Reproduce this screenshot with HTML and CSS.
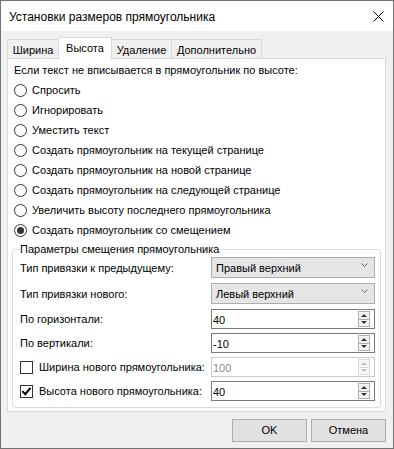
FILE: index.html
```html
<!DOCTYPE html>
<html lang="ru">
<head>
<meta charset="utf-8">
<title>Установки размеров прямоугольника</title>
<link rel="stylesheet" href="styles.css">
</head>
<body>
<div class="window">
  <div class="titlebar">
    <span class="title">Установки размеров прямоугольника</span>
    <svg class="close" width="11" height="11" viewBox="0 0 11 11"><path d="M0.5 0.5 L10.5 10.5 M10.5 0.5 L0.5 10.5" stroke="#000" stroke-width="1" fill="none"/></svg>
  </div>
  <div class="client">
    <div class="tabs">
      <div class="tab t1">Ширина</div>
      <div class="tab t2 sel">Высота</div>
      <div class="tab t3">Удаление</div>
      <div class="tab t4">Дополнительно</div>
    </div>
    <div class="panel">
      <div class="hdr">Если текст не вписывается в прямоугольник по высоте:</div>
      <div class="radios">
        <div class="radio"><span class="rb"></span>Спросить</div>
        <div class="radio"><span class="rb"></span>Игнорировать</div>
        <div class="radio"><span class="rb"></span>Уместить текст</div>
        <div class="radio"><span class="rb"></span>Создать прямоугольник на текущей странице</div>
        <div class="radio"><span class="rb"></span>Создать прямоугольник на новой странице</div>
        <div class="radio"><span class="rb"></span>Создать прямоугольник на следующей странице</div>
        <div class="radio"><span class="rb"></span>Увеличить высоту последнего прямоугольника</div>
        <div class="radio"><span class="rb on"></span>Создать прямоугольник со смещением</div>
      </div>
      <fieldset class="group">
        <legend>Параметры смещения прямоугольника</legend>
        <div class="row crow">
          <span class="lbl">Тип привязки к предыдущему:</span>
          <div class="combo"><span>Правый верхний</span><svg class="chev" width="7" height="4" viewBox="0 0 7 4"><polyline points="0.5,0.5 3.5,3.5 6.5,0.5" fill="none" stroke="#6a6a6a" stroke-width="1"/></svg></div>
        </div>
        <div class="row crow">
          <span class="lbl">Тип привязки нового:</span>
          <div class="combo"><span>Левый верхний</span><svg class="chev" width="7" height="4" viewBox="0 0 7 4"><polyline points="0.5,0.5 3.5,3.5 6.5,0.5" fill="none" stroke="#6a6a6a" stroke-width="1"/></svg></div>
        </div>
        <div class="row srow">
          <span class="lbl">По горизонтали:</span>
          <div class="spin"><span>40</span><span class="arrows"><span class="ab up"></span><span class="ab dn"></span></span></div>
        </div>
        <div class="row srow">
          <span class="lbl">По вертикали:</span>
          <div class="spin"><span>-10</span><span class="arrows"><span class="ab up"></span><span class="ab dn"></span></span></div>
        </div>
        <div class="row srow">
          <span class="lbl chk"><span class="cb"></span>Ширина нового прямоугольника:</span>
          <div class="spin dis"><span>100</span><span class="arrows"><span class="ab up"></span><span class="ab dn"></span></span></div>
        </div>
        <div class="row srow last">
          <span class="lbl chk"><span class="cb"><svg width="11" height="11" viewBox="0 0 11 11"><path d="M1.5 5.2 L4.2 8.2 L9.5 1.8" fill="none" stroke="#000" stroke-width="2"/></svg></span>Высота нового прямоугольника:</span>
          <div class="spin"><span>40</span><span class="arrows"><span class="ab up"></span><span class="ab dn"></span></span></div>
        </div>
      </fieldset>
    </div>
    <div class="footer">
      <button class="btn">OK</button>
      <button class="btn">Отмена</button>
    </div>
  </div>
</div>
</body>
</html>
```
FILE: styles.css
```css
* { box-sizing: border-box; }
html, body { margin: 0; padding: 0; background: #fff; }
body {
  font-family: "Liberation Sans", Arial, sans-serif;
  font-size: 11px;
  color: #000;
}
.window {
  width: 394px;
  height: 449px;
  border: 1px solid #727272;
  background: #f0f0f0;
  display: flex;
  flex-direction: column;
}
.titlebar {
  flex: none;
  height: 30px;
  background: #fff;
  display: flex;
  align-items: center;
  justify-content: space-between;
  padding: 1px 9px 0 8px;
}
.title { font-size: 12px; }
.close { display: block; margin-top: -1px; }
.client {
  flex: 1;
  display: flex;
  flex-direction: column;
  padding: 6px 7px 0 6px;
}
.tabs {
  display: flex;
  align-items: flex-end;
  height: 21px;
}
.tab {
  height: 19px;
  border: 1px solid #d9d9d9;
  border-bottom: none;
  margin-left: -1px;
  background: #f0f0f0;
  text-align: center;
  line-height: 16px;
  padding-top: 2px;
  white-space: nowrap;
}
.tab.sel {
  height: 22px;
  margin-bottom: -1px;
  background: #fff;
  padding-top: 2px;
  position: relative;
  z-index: 1;
}
.t1 { width: 52px; margin-left: 0; }
.t2 { width: 54px; }
.t3 { width: 61px; }
.t4 { width: 91px; }
.panel {
  height: 354px;
  border: 1px solid #d9d9d9;
  background: #fff;
  padding: 1px 4px 0 4px;
}
.hdr {
  height: 20px;
  line-height: 20px;
  padding-left: 2px;
  white-space: nowrap;
}
.radios { padding-left: 2px; }
.radio {
  height: 20px;
  display: flex;
  align-items: center;
  white-space: nowrap;
}
.rb {
  width: 13px;
  height: 13px;
  border: 1px solid #333;
  border-radius: 50%;
  background: #fff;
  margin-right: 5px;
  display: flex;
  align-items: center;
  justify-content: center;
  flex: none;
}
.rb.on::after {
  content: "";
  width: 7px;
  height: 7px;
  border-radius: 50%;
  background: #333;
}
.group {
  margin: 1px 0 0 0;
  border: 1px solid #dcdcdc;
  border-radius: 3px;
  padding: 0 5px 6px 7px;
  min-width: 0;
}
.group legend {
  line-height: 16px;
  padding: 0 1px;
  margin-left: -1px;
  white-space: nowrap;
}
.row {
  display: grid;
  grid-template-columns: minmax(0, 1fr) 164px;
  align-items: center;
  white-space: nowrap;
}
.crow { height: 21px; margin-bottom: 5px; }
.srow { height: 20px; margin-bottom: 4px; }
.srow.last { margin-bottom: 0; }
.lbl { display: flex; align-items: center; }
.cb {
  width: 13px;
  height: 13px;
  border: 1px solid #333;
  background: #fff;
  margin-right: 6px;
  flex: none;
  display: flex;
  align-items: center;
  justify-content: center;
}
.cb svg { display: block; }
.combo {
  height: 21px;
  border: 1px solid #adadad;
  background: #e5e5e5;
  display: flex;
  align-items: center;
  justify-content: space-between;
  padding: 1px 6px 0 4px;
}
.chev { display: block; align-self: flex-start; margin-top: 4px; }
.spin {
  height: 20px;
  border: 1px solid #7a7a7a;
  background: #fff;
  display: flex;
  align-items: center;
  justify-content: space-between;
  padding: 0 4px 0 1px;
}
.spin > span:first-child { padding-top: 1px; }
.arrows {
  width: 12px;
  height: 16px;
  display: flex;
  flex-direction: column;
  border: 1px solid #adadad;
  background: #f3f3f3;
}
.ab {
  flex: 1;
  display: flex;
  align-items: center;
  justify-content: center;
}
.ab.up { border-bottom: 1px solid #adadad; }
.ab.up::after {
  content: "";
  border-left: 3px solid transparent;
  border-right: 3px solid transparent;
  border-bottom: 3px solid #333;
}
.ab.dn::after {
  content: "";
  border-left: 3px solid transparent;
  border-right: 3px solid transparent;
  border-top: 3px solid #333;
}
.spin.dis { border-color: #cccccc; color: #8a8a8a; }
.spin.dis .arrows { border-color: #d9d9d9; background: #f7f7f7; }
.spin.dis .ab.up { border-bottom-color: #d9d9d9; }
.spin.dis .ab.up::after { border-bottom-color: #bdbdbd; }
.spin.dis .ab.dn::after { border-top-color: #bdbdbd; }
.footer {
  display: flex;
  justify-content: flex-end;
  gap: 4px;
  margin-top: 7px;
}
.btn {
  width: 75px;
  height: 23px;
  border: 1px solid #adadad;
  background: #e1e1e1;
  font-family: inherit;
  font-size: 11px;
  color: #000;
  padding: 0 0 2px 0;
  margin: 0;
}
```
